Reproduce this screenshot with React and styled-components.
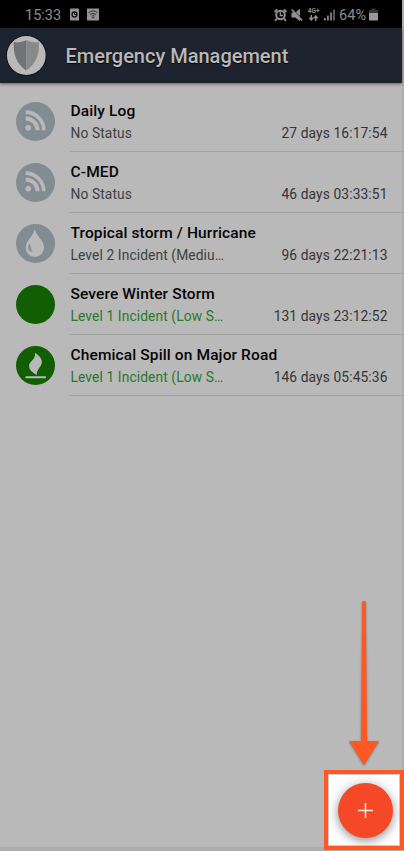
import React from 'react';
import styled, { createGlobalStyle } from 'styled-components';

const GlobalStyle = createGlobalStyle`
  * { box-sizing: border-box; }
  body { margin: 0; background: #adadad; font-family: Roboto, sans-serif; }
  svg { display: block; flex: none; }
`;

const Screen = styled.div`
  position: relative;
  width: 404px;
  height: 851px;
  overflow: hidden;
  padding: 0 2px 4px 0;
  background: #adadad;
`;

const Page = styled.main`
  display: flex;
  flex-direction: column;
  height: 847px;
  background: #b9b9b9;
`;

const StatusBar = styled.div`
  display: flex;
  align-items: center;
  justify-content: space-between;
  height: 28px;
  padding: 1px 24px 0 25px;
  background: #000;
  color: #8d8d8d;
`;

const StatusGroup = styled.div`
  display: flex;
  align-items: center;
`;

const StatusText = styled.span`
  font-size: 14.5px;
  line-height: 18px;
  margin: ${(p) => p.$margin || '0'};
  padding-top: 2px;
`;

const Header = styled.header`
  display: flex;
  align-items: center;
  gap: 19px;
  height: 55px;
  padding-left: 5.5px;
  background: #1e242f;
  box-shadow: 0 1px 3px rgba(0, 0, 0, 0.5);
`;

const Heading = styled.h1`
  margin: 1px 0 0;
  font-size: 20px;
  font-weight: 500;
  line-height: 24px;
  color: #b9b9b9;
  white-space: nowrap;
  text-shadow: 0 1px 1px #000;
`;

const List = styled.ul`
  list-style: none;
  margin: 8px 0 0;
  padding: 0;
`;

const Row = styled.li`
  display: flex;
  height: 61px;
  padding-left: 15.5px;
  gap: 15px;
`;

const Badge = styled.div`
  display: flex;
  align-items: center;
  justify-content: center;
  width: 39.5px;
  height: 39.5px;
  margin-top: 10.5px;
  border-radius: 50%;
  background: ${(p) => (p.$active ? '#125e02' : '#828c93')};
`;

const Details = styled.div`
  flex: 1;
  min-width: 0;
  padding: 10px 14.5px 0 0.5px;
  border-bottom: 1px solid #a3a3a3;
`;

const Title = styled.h2`
  margin: 0;
  font-size: 15.5px;
  font-weight: 500;
  line-height: 21px;
  letter-spacing: 0.12px;
  color: #050505;
  white-space: nowrap;
`;

const Meta = styled.div`
  display: flex;
  justify-content: space-between;
  margin-top: 1px;
  font-size: 13.8px;
  line-height: 21px;
  letter-spacing: 0.1px;
  color: #353535;
`;

const Level = styled.span`
  color: ${(p) => (p.$active ? '#26792a' : '#404040')};
`;

const ArrowLayer = styled.svg`
  position: absolute;
  left: 344px;
  top: 598px;
  filter: drop-shadow(0 1px 1px rgba(0, 0, 0, 0.35));
`;

const Highlight = styled.div`
  position: absolute;
  left: 324px;
  top: 770px;
  width: 80px;
  height: 80px;
  border: 4px solid #ff5823;
  background: #fff;
  overflow: hidden;
  box-shadow: inset 0 0 0 1px #ccc;
`;

const AddButton = styled.button`
  display: flex;
  align-items: center;
  justify-content: center;
  width: 55px;
  height: 55px;
  margin: 9px 0 0 10.4px;
  padding: 0;
  border: 0;
  border-radius: 50%;
  background: #f44826;
  box-shadow: 0 3px 8px rgba(0, 0, 0, 0.32), 0 1px 14px rgba(0, 0, 0, 0.16);
`;

const FeedIcon = () => (
  <svg width="39.5" height="39.5" viewBox="0 0 39.5 39.5" fill="none" stroke="#b9b9b9">
    <circle cx="12.2" cy="25.8" r="2.8" fill="#b9b9b9" stroke="none" />
    <path d="M9.7 16.4A11.9 11.9 0 0 1 21.6 28.3" strokeWidth="4" />
    <path d="M9.7 10.2A18.1 18.1 0 0 1 27.8 28.3" strokeWidth="3.7" />
  </svg>
);

const DropIcon = () => (
  <svg width="39.5" height="39.5" viewBox="0 0 39.5 39.5">
    <path d="M18.8 5.2C17.4 12.2 9.7 16.4 9.7 23.7A9.2 9.2 0 0 0 28.1 23.7C28.1 16.4 20.3 12.2 18.8 5.2Z" fill="#b9b9b9" />
    <path d="M13.7 19.5C10.8 23.4 12.3 27.7 16.7 27.7C14.4 25.5 15.2 22.5 13.7 19.5Z" fill="#828c93" />
  </svg>
);

const FlameIcon = () => (
  <svg width="39.5" height="39.5" viewBox="0 0 39.5 39.5" fill="#b9b9b9">
    <path d="M18.8 6.8C24 10 26.4 13.3 25.7 17.2C25.3 20.2 20.4 24 20.7 29C16 26.5 12.8 23.3 13.1 19.6C13.5 14.7 20.4 13.6 18.8 6.8Z" />
    <rect x="9.5" y="30.3" width="20.5" height="2" rx="0.4" />
  </svg>
);

const icons = { feed: FeedIcon, drop: DropIcon, flame: FlameIcon };

const ShieldLogo = () => (
  <svg width="41" height="41" viewBox="0 0 41 41">
    <circle cx="20.3" cy="20.5" r="20.2" fill="#090c12" />
    <circle cx="20.3" cy="20.5" r="19.4" fill="#b9b9b9" />
    <path d="M20.3 5.3Q14 8.3 7.8 7.1C7 19.3 10.5 29.3 20.3 35.6Z" fill="#717376" />
    <path d="M20.3 5.3Q26.6 8.3 32.8 7.1C33.6 19.3 30.1 29.3 20.3 35.6Z" fill="#87898b" />
  </svg>
);

const NotificationIcons = () => (
  <svg width="31" height="14" viewBox="0 0 31 14">
    <rect x="1" y="0.5" width="9" height="12" rx="0.7" fill="#949494" />
    <circle cx="5.5" cy="6.5" r="2.4" fill="#aaa" stroke="#151515" strokeWidth="1.5" />
    <path d="M5.5 4.5v2h2" fill="none" stroke="#151515" strokeWidth="1" />
    <rect x="18" y="0.5" width="12" height="12" rx="0.5" fill="#949494" />
    <g fill="none" stroke="#333" strokeWidth="1">
      <path d="M19.5 4.7Q24 1.2 28.5 4.7" />
      <path d="M21 6.5Q24 4.2 27 6.5" />
      <path d="M22.5 8.2Q24 7.1 25.5 8.2" />
    </g>
    <path d="m22.7 8.9 1.3 1.5 1.3-1.5Z" fill="#222" />
  </svg>
);

const AlarmIcon = () => (
  <svg width="13" height="14" viewBox="0 0 13 14" fill="none" stroke="#919191">
    <circle cx="6.5" cy="7" r="4.3" strokeWidth="2" />
    <path d="M0.6 4 3.3 1.3M12.4 4 9.7 1.3M3 10.5 1 12.8M10 10.5l2 2.3" strokeWidth="1.8" />
    <path d="M6.3 4.3V7.5H9" strokeWidth="1.3" />
  </svg>
);

const MuteIcon = () => (
  <svg width="12" height="14" viewBox="0 0 12 14">
    <path d="M0.5 4.5h3.7L9 0.8v12.4L4.2 9.5H0.5Z" fill="#919191" />
    <path d="M1.6 1.2 11.8 11.5" stroke="#000" strokeWidth="1" />
    <path d="M0.7 1.5 11.2 12.5" stroke="#919191" strokeWidth="1.7" />
  </svg>
);

const NetworkBox = styled.div`
  display: flex;
  flex-direction: column;
  align-items: center;
  width: 13px;
  height: 14px;
  font-size: 6.5px;
  font-weight: 700;
  line-height: 7px;
`;

const NetworkIcon = () => (
  <NetworkBox>
    <span>4G+</span>
    <svg width="9" height="6" viewBox="0 0 9 6" fill="none" stroke="#919191" strokeWidth="1.4">
      <path d="M2.3 0v4.8M0.4 2.8 2.3 5 4.2 2.8M6.7 6V1.2M4.8 3.2 6.7 1l1.9 2.2" />
    </svg>
  </NetworkBox>
);

const SignalIcon = () => (
  <svg width="11" height="14" viewBox="0 0 11 14" fill="#8e8e8e">
    <path d="M0 10h1.7v2.5H0zM3.1 7.5h1.7v5H3.1zM6.2 4.5h1.7v8H6.2z" />
    <path d="M9.3 1.5h1.5v11H9.3z" fill="#777" />
  </svg>
);

const BatteryIcon = () => (
  <svg width="9" height="14" viewBox="0 0 9 14">
    <path d="M2.5 0.5h4V2h-4zM0 2h9v4H0z" fill="#363636" />
    <rect y="5" width="9" height="7.5" rx="0.6" fill="#989898" />
  </svg>
);

const StatusIcons = styled.div`
  display: flex;
  align-items: center;
  gap: 4px;

  ${StatusText} {
    margin: 0 -1px 0 0;
  }
`;

const incidents = [
  { title: 'Daily Log', level: 'No Status', elapsed: '27 days 16:17:54', icon: 'feed' },
  { title: 'C-MED', level: 'No Status', elapsed: '46 days 03:33:51', icon: 'feed' },
  { title: 'Tropical storm / Hurricane', level: 'Level 2 Incident (Mediu…', elapsed: '96 days 22:21:13', icon: 'drop' },
  { title: 'Severe Winter Storm', level: 'Level 1 Incident (Low S…', elapsed: '131 days 23:12:52', active: true },
  { title: 'Chemical Spill on Major Road', level: 'Level 1 Incident (Low S…', elapsed: '146 days 05:45:36', icon: 'flame', active: true },
];

function Incident({ title, level, elapsed, icon, active }) {
  const Icon = icons[icon];
  return (
    <Row>
      <Badge $active={active}>{Icon && <Icon />}</Badge>
      <Details>
        <Title>{title}</Title>
        <Meta>
          <Level $active={active}>{level}</Level>
          <span>{elapsed}</span>
        </Meta>
      </Details>
    </Row>
  );
}

export default function App() {
  return (
    <>
      <GlobalStyle />
      <Screen>
        <Page>
          <StatusBar>
            <StatusGroup>
              <StatusText $margin="0 8px 0 0">15:33</StatusText>
              <NotificationIcons />
            </StatusGroup>
            <StatusIcons>
              <AlarmIcon />
              <MuteIcon />
              <NetworkIcon />
              <SignalIcon />
              <StatusText>64%</StatusText>
              <BatteryIcon />
            </StatusIcons>
          </StatusBar>
          <Header>
            <ShieldLogo />
            <Heading>Emergency Management</Heading>
          </Header>
          <List>
            {incidents.map((item) => (
              <Incident key={item.title} {...item} />
            ))}
          </List>
        </Page>
        <ArrowLayer width="40" height="172" viewBox="0 0 40 172">
          <path d="M18.2 4Q18.2 3 20 3T21.8 4L23 143H35L20 167 5 143H17Z" fill="#ff5823" />
        </ArrowLayer>
        <Highlight>
          <AddButton aria-label="Add incident">
            <svg width="15" height="15" viewBox="0 0 15 15" fill="none" stroke="#ffe9e2" strokeWidth="1.5">
              <path d="M7.5 0v15M0 7.5h15" />
            </svg>
          </AddButton>
        </Highlight>
      </Screen>
    </>
  );
}
